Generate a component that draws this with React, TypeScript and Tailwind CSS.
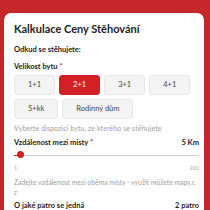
import { useState } from 'react';

const sizes = ['1+1', '2+1', '3+1', '4+1', '5+kk', 'Rodinný dům'];

export default function App() {
  const [size, setSize] = useState('2+1');
  const [distance] = useState(5);

  return (
    <div className="h-[210px] w-[210px] overflow-hidden bg-[#c4262c] pt-[13px] pl-[4px] pr-[6px] font-['Lato',sans-serif]">
      <div className="h-[260px] rounded-t-[7px] bg-white pl-[10px] pr-[5px] pt-[9px] text-[#222]">
        {/* nadpis */}
        <h1 className="text-[11px] leading-[14px] font-bold">Kalkulace Ceny Stěhování</h1>

        <p className="mt-[9px] text-[7.5px] leading-[10px] font-bold">Odkud se stěhujete:</p>

        <p className="mt-[7px] text-[7.5px] leading-[10px] font-bold">
          Velikost bytu <span className="text-[#d32027]">*</span>
        </p>

        <div className="mt-[3px] flex w-[180px] flex-wrap gap-[4px]">
          {sizes.map((s) => (
            <button
              key={s}
              onClick={() => setSize(s)}
              className={`h-[20px] rounded-[3px] border px-[13px] text-[7.5px] ${
                size === s
                  ? 'border-[#d32027] bg-[#d32027] text-white'
                  : 'border-[#e6e6e6] bg-[#f4f4f4] text-[#444]'
              }`}
            >
              {s}
            </button>
          ))}
        </div>

        <p className="mt-[5px] text-[7px] leading-[9px] tracking-[0.1px] text-[#a0a0a0]">
          Vyberte dispozici bytu, ze kterého se stěhujete
        </p>

        {/* vzdálenost */}
        <div className="mt-[5px] flex items-center justify-between text-[7.5px] leading-[10px] font-bold">
          <span>
            Vzdálenost mezi místy <span className="text-[#d32027]">*</span>
          </span>
          <span>{distance} Km</span>
        </div>

        <div className="relative mt-[3px] h-[8px]">
          <div className="absolute left-0 right-0 top-[3.5px] h-px bg-[#d0d0d0]" />
          <div className="absolute left-0 top-[3.5px] h-px w-[6px] bg-[#d32027]" />
          <div className="absolute left-[3px] top-0 h-[7px] w-[7px] rounded-full bg-[#d32027]" />
        </div>

        <div className="mt-[5px] flex justify-between text-[5.5px] leading-[8px] text-[#aaa]">
          <span>1</span>
          <span>200</span>
        </div>

        <p className="mt-[5px] whitespace-nowrap text-[6.8px] leading-[10px] text-[#a0a0a0]">
          Zadejte vzdálenost mezi oběma místy - využít můžete mapy.c
          <br />z
        </p>

        <div className="mt-[4px] flex items-center justify-between text-[7.5px] leading-[10px] font-bold">
          <span>O jaké patro se jedná</span>
          <span>2 patro</span>
        </div>
      </div>
    </div>
  );
}
